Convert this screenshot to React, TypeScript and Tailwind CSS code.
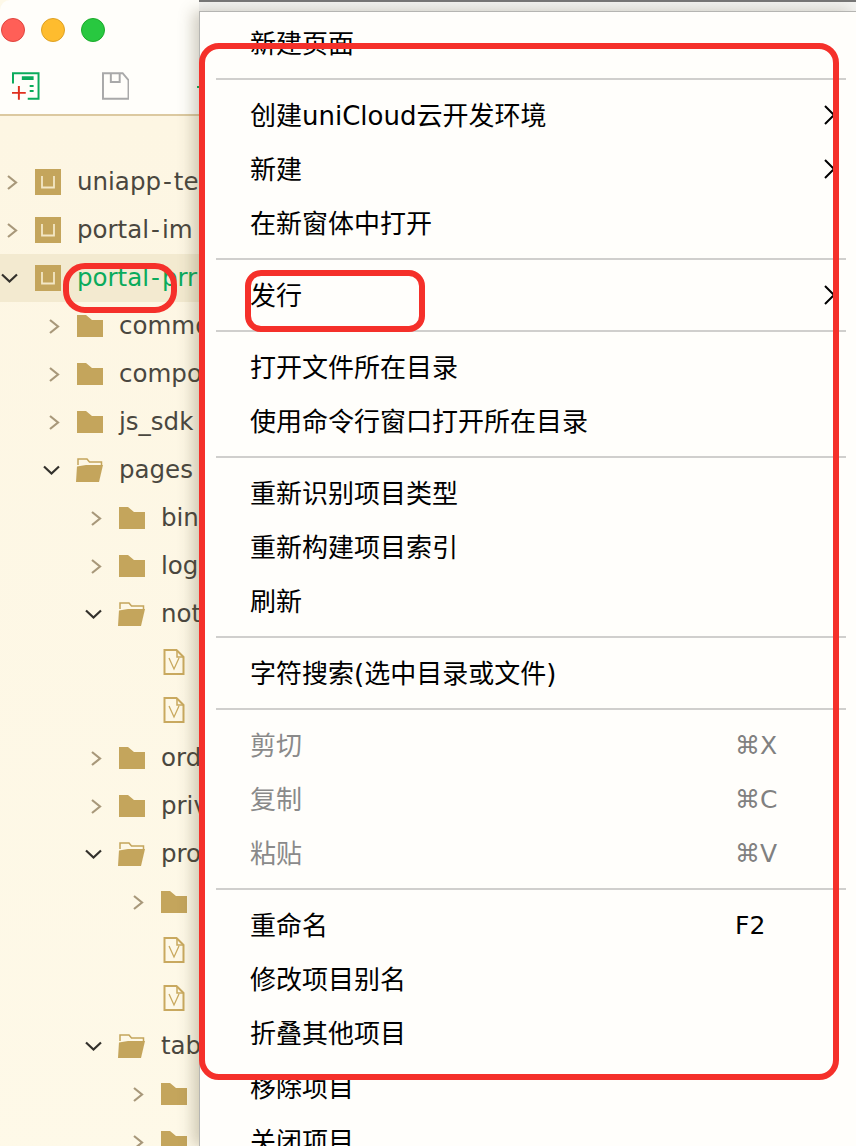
const font = '[font-family:"DejaVu_Sans","Noto_Sans_CJK_SC",sans-serif]';

type TreeKind = 'project' | 'folder' | 'open' | 'file';

interface TreeRow {
  level: number;
  kind: TreeKind;
  name?: string;
  active?: boolean;
}

const tree: TreeRow[] = [
  { level: 0, kind: 'project', name: 'uniapp-test' },
  { level: 0, kind: 'project', name: 'portal-im' },
  { level: 0, kind: 'project', name: 'portal-prr', active: true },
  { level: 1, kind: 'folder', name: 'common' },
  { level: 1, kind: 'folder', name: 'components' },
  { level: 1, kind: 'folder', name: 'js_sdk' },
  { level: 1, kind: 'open', name: 'pages' },
  { level: 2, kind: 'folder', name: 'bind' },
  { level: 2, kind: 'folder', name: 'login' },
  { level: 2, kind: 'open', name: 'notice' },
  { level: 3, kind: 'file' },
  { level: 3, kind: 'file' },
  { level: 2, kind: 'folder', name: 'order' },
  { level: 2, kind: 'folder', name: 'privacy' },
  { level: 2, kind: 'open', name: 'product' },
  { level: 3, kind: 'folder' },
  { level: 3, kind: 'file' },
  { level: 3, kind: 'file' },
  { level: 2, kind: 'open', name: 'tabbar' },
  { level: 3, kind: 'folder' },
  { level: 3, kind: 'folder' },
];

type MenuEntry =
  | 'sep'
  | { label: string; arrow?: boolean; shortcut?: string; disabled?: boolean };

const menu: MenuEntry[] = [
  { label: '新建页面' },
  'sep',
  { label: '创建uniCloud云开发环境', arrow: true },
  { label: '新建', arrow: true },
  { label: '在新窗体中打开' },
  'sep',
  { label: '发行', arrow: true },
  'sep',
  { label: '打开文件所在目录' },
  { label: '使用命令行窗口打开所在目录' },
  'sep',
  { label: '重新识别项目类型' },
  { label: '重新构建项目索引' },
  { label: '刷新' },
  'sep',
  { label: '字符搜索(选中目录或文件)' },
  'sep',
  { label: '剪切', shortcut: '⌘X', disabled: true },
  { label: '复制', shortcut: '⌘C', disabled: true },
  { label: '粘贴', shortcut: '⌘V', disabled: true },
  'sep',
  { label: '重命名', shortcut: 'F2' },
  { label: '修改项目别名' },
  { label: '折叠其他项目' },
  { label: '移除项目' },
  { label: '关闭项目' },
];

function Twisty({ open }: { open: boolean }) {
  return (
    <svg width="17" height="16" viewBox="0 0 17 16" fill="none">
      {open ? (
        <path d="M1 4.5l7.5 7 7.5-7" stroke="#33312c" strokeWidth="2.2" />
      ) : (
        <path d="M7 2l8 6.5-8 6.5" stroke="#a8987a" strokeWidth="2.2" />
      )}
    </svg>
  );
}

function ProjectIcon() {
  return (
    <svg width="26" height="26" viewBox="0 0 26 26">
      <rect width="26" height="26" fill="#c4a55c" />
      <path d="M7 7v11.5h12V7" fill="none" stroke="#f3e7c6" strokeWidth="1.8" />
    </svg>
  );
}

function FolderIcon() {
  return (
    <svg width="26" height="22" viewBox="0 0 26 22">
      <path d="M0 0h9l6 5h11v17H0z" fill="#c4a55c" />
    </svg>
  );
}

function OpenFolderIcon() {
  return (
    <svg width="28" height="24" viewBox="0 0 28 24" className="-ml-[1px]">
      <path d="M2 7V1h9l2.500 3h12v3" fill="none" stroke="#c4a55c" strokeWidth="1.500" />
      <path d="M1 8.500l9-1.500h17l-4 17H0z" fill="#c4a55c" />
    </svg>
  );
}

function FileIcon() {
  return (
    <svg width="22" height="26" viewBox="0 0 22 26" fill="none" stroke="#c9a95f">
      <path d="M1.500 1h12l7 7v17h-19z" strokeWidth="2" />
      <path d="M14 1v7h7" strokeWidth="1.500" />
      <path d="M6 9l5 11 5-11" strokeWidth="1.300" />
    </svg>
  );
}

function Row({ row }: { row: TreeRow }) {
  const isOpen = row.kind === 'open' || !!row.active;
  const parts = row.name ? row.name.split('-') : [];
  return (
    <div
      className={`flex h-[48px] items-center whitespace-nowrap ${row.active ? 'bg-[#f3ead0]' : ''}`}
      style={{ paddingLeft: row.level * 42 + 1 }}
    >
      <div className="flex w-[34px] shrink-0 items-center">
        {row.kind !== 'file' && <Twisty open={isOpen} />}
      </div>
      <div className="flex w-[42px] shrink-0 items-center">
        {row.kind === 'project' && <ProjectIcon />}
        {row.kind === 'folder' && <FolderIcon />}
        {row.kind === 'open' && <OpenFolderIcon />}
        {row.kind === 'file' && (
          <div className="ml-[2px]">
            <FileIcon />
          </div>
        )}
      </div>
      {row.name && (
        <span className={`text-[24.5px] ${row.active ? 'text-[#0aab5c]' : 'text-[#4a473f]'}`}>
          {parts[0]}
          {parts[1] && (
            <>
              <span className="mx-[2px]">-</span>
              {parts[1]}
            </>
          )}
        </span>
      )}
    </div>
  );
}

function Sidebar() {
  return (
    <div className="flex w-[199px] shrink-0 flex-col overflow-hidden bg-[#fef9e8]">
      {/* toolbar */}
      <div className="h-[116px] shrink-0 rounded-tl-[10px] border-b-2 border-[#dcc9a0] bg-[#fffefa]">
        <div className="flex gap-[16px] pl-[0.5px] pt-[18px]">
          <span className="h-[24px] w-[24px] rounded-full border border-[#e0443e] bg-[#ff5f57]" />
          <span className="h-[24px] w-[24px] rounded-full border border-[#dea123] bg-[#febc2e]" />
          <span className="h-[24px] w-[24px] rounded-full border border-[#1aab29] bg-[#28c840]" />
        </div>
        <div className="flex gap-[62px] pl-[12px] pt-[30px]">
          <svg width="28" height="28" viewBox="0 0 28 28" fill="none">
            <path d="M1 11.500V1h26v26H16" stroke="#0aab5c" strokeWidth="2" />
            <path d="M10 4h12v4H10zM18 13h4v2h-4zM18 18h4v2h-4z" fill="#0aab5c" />
            <path d="M0 21h14M7 14v14" stroke="#e0301e" strokeWidth="2" />
          </svg>
          <svg width="28" height="28" viewBox="0 0 28 28" fill="none" stroke="#a9a9a9" strokeWidth="2">
            <path d="M1 1h20l6 7v19H1z" />
            <path d="M9 1v9h9V1" />
          </svg>
          <span className="ml-[6px] mt-[14px] h-[2px] w-[2px] bg-[#0aab5c]" />
        </div>
      </div>
      <div className="bg-gradient-to-b from-[#fdf6e3] to-[#fef9e8] pt-[42px]">
        {tree.map((row, i) => (
          <Row key={i} row={row} />
        ))}
      </div>
    </div>
  );
}

function ContextMenu() {
  return (
    <div className="relative flex-1 bg-gradient-to-b from-[#f4f4f2] to-[#e6e6e4] pt-[11px]">
      <div className="absolute inset-x-0 top-0 h-[2px] bg-[#777777]" />
      <div className="relative h-full border-l border-t border-[#b5b5b2] bg-[#fffefb] pt-[4px] shadow-[-6px_0_14px_rgba(90,80,50,0.28)]">
        {menu.map((entry, i) =>
          entry === 'sep' ? (
            <div key={i} className="ml-[16px] mr-[10px] flex h-[18px] items-center">
              <div className="h-[2px] w-full bg-[#d0cfcd]" />
            </div>
          ) : (
            <div
              key={i}
              className={`flex h-[54px] items-center whitespace-nowrap pl-[50px] pt-[2px] text-[26px] ${
                entry.disabled ? 'text-[#8a8a8a]' : 'text-black'
              }`}
            >
              <span>{entry.label}</span>
              {entry.shortcut && (
                <span className={`ml-auto mr-[61px] w-[60px] text-[25px] ${entry.disabled ? 'text-[#808080]' : 'text-black'}`}>
                  {entry.shortcut}
                </span>
              )}
              {entry.arrow && (
                <svg width="12" height="20" viewBox="0 0 12 20" fill="none" className="ml-auto mr-[20px] -mt-[2px]">
                  <path d="M1 1l9 9-9 9" stroke="#000" strokeWidth="2" />
                </svg>
              )}
            </div>
          ),
        )}
      </div>
    </div>
  );
}

export default function App() {
  return (
    <div className={`relative flex h-[1146px] w-[856px] overflow-hidden bg-[#f0f0ee] ${font}`}>
      <Sidebar />
      <ContextMenu />
      {/* red annotations drawn over the screenshot */}
      <div className="absolute left-[199px] top-[43px] h-[1037px] w-[640px] rounded-[20px] border-[6px] border-[#f5302a]" />
      <div className="absolute left-[245px] top-[270px] h-[62px] w-[180px] rounded-[16px] border-[6px] border-[#f5302a]" />
      <div className="absolute left-[63px] top-[263px] h-[50px] w-[114px] rounded-[22px] border-[6px] border-[#f5302a]" />
    </div>
  );
}
